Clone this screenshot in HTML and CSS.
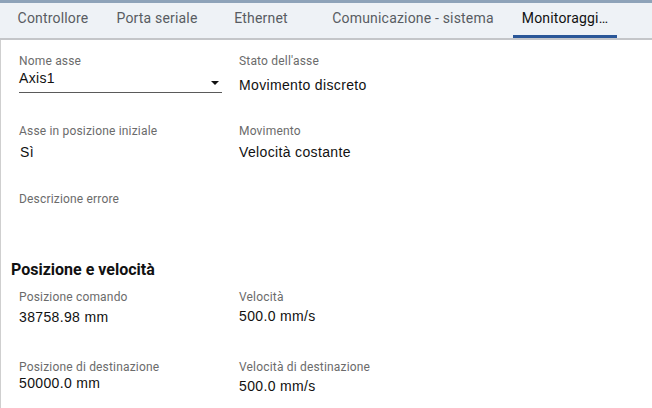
FILE: index.html
```html
<!DOCTYPE html>
<html lang="it">
<head>
    <meta charset="UTF-8">
    <meta name="viewport" content="width=device-width, initial-scale=1.0">
    <title>Monitoraggio asse</title>
    <link rel="stylesheet" href="styles.css">
</head>
<body>
<div class="top-strip"></div>
<div class="tabs">
    <div class="tab">Controllore</div>
    <div class="tab">Porta seriale</div>
    <div class="tab">Ethernet</div>
    <div class="tab tab-wide">Comunicazione - sistema</div>
    <div class="tab active">Monitoraggi…</div>
</div>

<div class="content">
    <div class="fields first">
        <div class="field">
            <div class="label">Nome asse</div>
            <div class="select">
                <span>Axis1</span>
                <svg class="arrow" width="8" height="4" viewBox="0 0 8 4"><polygon points="0,0 8,0 4,4" fill="#111"/></svg>
            </div>
        </div>
        <div class="field">
            <div class="label">Stato dell'asse</div>
            <div class="value mt9">Movimento discreto</div>
        </div>
        <div class="field">
            <div class="label">Asse in posizione iniziale</div>
            <div class="value mt6 nudge">Sì</div>
        </div>
        <div class="field">
            <div class="label">Movimento</div>
            <div class="value mt6">Velocità costante</div>
        </div>
        <div class="field">
            <div class="label">Descrizione errore</div>
            <div class="value"></div>
        </div>
    </div>

    <h4 class="section-title">Posizione e velocità</h4>

    <div class="fields second">
        <div class="field">
            <div class="label">Posizione comando</div>
            <div class="value mt5">38758.98 mm</div>
        </div>
        <div class="field">
            <div class="label">Velocità</div>
            <div class="value mt4">500.0 mm/s</div>
        </div>
        <div class="field">
            <div class="label">Posizione di destinazione</div>
            <div class="value mt1">50000.0 mm</div>
        </div>
        <div class="field">
            <div class="label">Velocità di destinazione</div>
            <div class="value mt4">500.0 mm/s</div>
        </div>
    </div>
</div>
</body>
</html>
```

FILE: styles.css
```css
body{
    margin: 0;
    background-color: white;
    font-family: Roboto, "Liberation Sans", sans-serif;
    color: #111;
    overflow: hidden;
}
.top-strip{
    height: 3px;
    background-color: #8ea3b9;
}
.tabs{
    display: flex;
    height: 35px;
    padding-left: 1px;
    background-color: #eef2f6;
    border-bottom: 2px solid #c4c6c9;
}
.tab{
    box-sizing: border-box;
    width: 104px;
    height: 35px;
    padding-top: 7px;
    font-size: 14px;
    line-height: 16px;
    letter-spacing: 0.18px;
    text-align: center;
    color: #585c62;
    white-space: nowrap;
}
.tab-wide{
    width: 200px;
}
.tab.active{
    color: #111;
    border-bottom: 3px solid #2a5798;
}
.content{
    min-height: 368px;
    border-left: 1px solid #cfcfcf;
    padding-left: 10px;
}
.fields{
    display: grid;
    grid-template-columns: 220px 1fr;
    margin-left: 8px;
}
.fields.first{
    padding-top: 14px;
    grid-template-rows: 70px 68px 68px;
}
.fields.second{
    margin-top: 10px;
    grid-template-rows: 70px 48px;
}
.label{
    font-size: 12px;
    line-height: 14px;
    letter-spacing: 0.18px;
    color: #6b6b6b;
}
.value{
    font-family: "Liberation Sans", Arial, sans-serif;
    font-size: 14px;
    line-height: 16px;
    letter-spacing: 0.35px;
    color: #111;
}
.nudge{
    padding-left: 1px;
}
.mt1{ margin-top: 1px; }
.mt4{ margin-top: 4px; }
.mt5{ margin-top: 5px; }
.mt6{ margin-top: 6px; }
.mt9{ margin-top: 9px; }
.select{
    display: flex;
    justify-content: space-between;
    align-items: flex-start;
    width: 203px;
    margin-top: 2px;
    padding-bottom: 6px;
    border-bottom: 1px solid #5a5a5a;
    font-family: "Liberation Sans", Arial, sans-serif;
    font-size: 14px;
    line-height: 16px;
    letter-spacing: 0.35px;
}
.arrow{
    margin-top: 11px;
    margin-right: 3px;
}
.section-title{
    margin: 0;
    font-size: 16px;
    line-height: 20px;
    font-weight: bold;
    color: #111;
}
```
